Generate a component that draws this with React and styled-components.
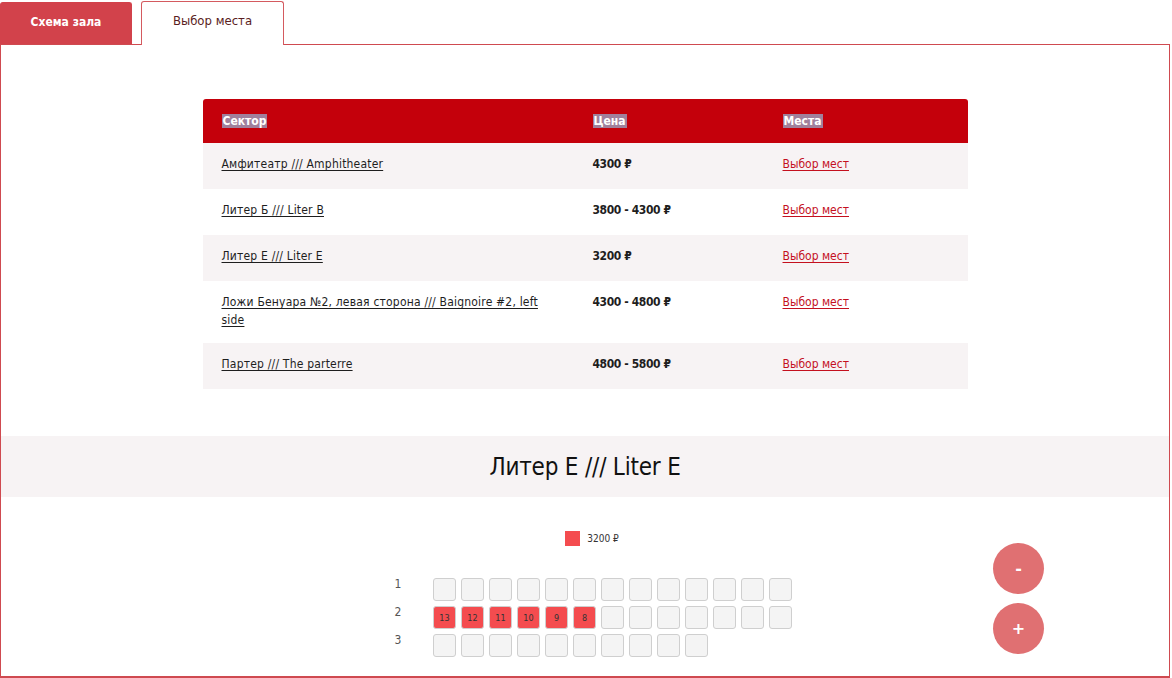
import React from 'react';
import styled, { createGlobalStyle } from 'styled-components';

const GlobalStyle = createGlobalStyle`
  html, body {
    margin: 0;
    padding: 0;
    background: #fff;
  }
  body {
    font-family: "DejaVu Sans Condensed", "DejaVu Sans", "Liberation Sans", sans-serif;
    color: #222;
  }
`;

const Page = styled.div`
  width: 1170px;
  height: 678px;
  display: flex;
  flex-direction: column;
`;

const Tabs = styled.div`
  display: flex;
  align-items: flex-end;
  gap: 9px;
  height: 44px;
`;

const Tab = styled.div`
  height: ${p => (p.$active ? '44px' : '42px')};
  width: ${p => p.$w}px;
  box-sizing: border-box;
  display: flex;
  align-items: center;
  justify-content: center;
  padding-bottom: ${p => (p.$active ? '6px' : '4px')};
  font-size: ${p => (p.$active ? '13px' : '12px')};
  border-radius: 3px 3px 0 0;
  background: ${p => (p.$active ? '#fff' : '#d2424b')};
  color: ${p => (p.$active ? '#5a1d22' : '#fff')};
  font-weight: ${p => (p.$active ? 'normal' : 'bold')};
  border: 1px solid ${p => (p.$active ? '#d45a5f' : '#d2424b')};
  border-bottom: none;
  margin-bottom: ${p => (p.$active ? '-1px' : '0')};
  position: relative;
  z-index: 1;
`;

const Panel = styled.div`
  flex: 1;
  border: 1px solid #cf4a50;
  border-bottom-width: 2px;
  display: flex;
  flex-direction: column;
  align-items: center;
  padding-top: 54px;
`;

const Table = styled.div`
  width: 765px;
  display: flex;
  flex-direction: column;
`;

const Row = styled.div`
  display: grid;
  grid-template-columns: 371px 190px 1fr;
  min-height: 46px;
  background: ${p => (p.$shade ? '#f7f3f4' : '#fff')};
  font-size: 12px;
  line-height: 18px;
`;

const HeadRow = styled(Row)`
  min-height: 44px;
  background: #c4000b;
  border-radius: 3px 3px 0 0;
  font-weight: bold;
  color: #fff;
`;

const Cell = styled.div`
  padding: 12px 19px 14px 19px;
  padding-right: ${p => (p.$wide ? '30px' : '19px')};
`;

const HeadCell = styled.div`
  padding: 13px 19px;
`;

const Selected = styled.span`
  background: #a0809c;
  padding: 0 1px;
`;

const SectorLink = styled.a`
  color: #1e1e1e;
  letter-spacing: 0.2px;
  text-decoration: underline;
  text-underline-offset: 2px;
`;

const Price = styled.span`
  font-weight: bold;
  letter-spacing: -0.4px;
  color: #1e1e1e;
`;

const SeatsLink = styled.a`
  color: #c4101e;
  text-decoration: underline;
  text-underline-offset: 2px;
`;

const TitleBand = styled.div`
  align-self: stretch;
  margin-top: 47px;
  height: 61px;
  background: #f7f3f4;
  display: flex;
  align-items: center;
  justify-content: center;
  font-size: 24px;
  color: #111;
  letter-spacing: -0.2px;
`;

const MapArea = styled.div`
  align-self: stretch;
  position: relative;
  display: flex;
  flex-direction: column;
  padding-top: 34px;
`;

const Legend = styled.div`
  display: flex;
  align-items: center;
  justify-content: center;
  gap: 7px;
  font-size: 10px;
  color: #333;
  padding-left: 14px;
`;

const Swatch = styled.span`
  width: 15px;
  height: 15px;
  background: #f44c4f;
`;

const Grid = styled.div`
  margin-top: 32px;
  margin-left: 386px;
  display: flex;
  flex-direction: column;
  gap: 5px;
`;

const SeatRow = styled.div`
  display: flex;
  align-items: flex-start;
`;

const RowLabel = styled.div`
  width: 22px;
  text-align: center;
  font-size: 12px;
  line-height: 14px;
  color: #555;
  margin-right: 24px;
  margin-top: -1px;
`;

const Seats = styled.div`
  display: flex;
  gap: 5px;
`;

const Seat = styled.div`
  width: 23px;
  height: 23px;
  box-sizing: border-box;
  border: 1px solid #cfcfcf;
  border-radius: 3px;
  background: ${p => (p.$taken ? '#f44c4f' : '#f4f4f4')};
  display: flex;
  align-items: center;
  justify-content: center;
  font-size: 9px;
  color: #333;
`;

const Zoom = styled.div`
  position: absolute;
  right: 125px;
  top: 46px;
  display: flex;
  flex-direction: column;
  gap: 9px;
`;

const ZoomButton = styled.button`
  width: 51px;
  height: 51px;
  border-radius: 50%;
  border: none;
  background: #e07072;
  color: #fff;
  font-family: "DejaVu Sans", sans-serif;
  font-size: 16px;
  font-weight: bold;
  display: flex;
  align-items: center;
  justify-content: center;
  padding: 0;
`;

const rows = [
  { sector: 'Амфитеатр /// Amphitheater', price: '4300 ₽' },
  { sector: 'Литер Б /// Liter В', price: '3800 - 4300 ₽' },
  { sector: 'Литер Е /// Liter Е', price: '3200 ₽' },
  { sector: 'Ложи Бенуара №2, левая сторона /// Baignoire #2, left side', price: '4300 - 4800 ₽' },
  { sector: 'Партер /// The parterre', price: '4800 - 5800 ₽' },
];

const seatRows = [
  { n: 1, seats: Array(13).fill(null) },
  { n: 2, seats: [13, 12, 11, 10, 9, 8, null, null, null, null, null, null, null] },
  { n: 3, seats: Array(10).fill(null) },
];

export default function App() {
  return (
    <>
      <GlobalStyle />
      <Page>
        <Tabs>
          <Tab $w={132}>Схема зала</Tab>
          <Tab $w={143} $active>Выбор места</Tab>
        </Tabs>
        <Panel>
          <Table>
            <HeadRow>
              <HeadCell><Selected>Сектор</Selected></HeadCell>
              <HeadCell><Selected>Цена</Selected></HeadCell>
              <HeadCell><Selected>Места</Selected></HeadCell>
            </HeadRow>
            {rows.map((r, i) => (
              <Row key={r.sector} $shade={i % 2 === 0}>
                <Cell $wide><SectorLink>{r.sector}</SectorLink></Cell>
                <Cell><Price>{r.price}</Price></Cell>
                <Cell><SeatsLink>Выбор мест</SeatsLink></Cell>
              </Row>
            ))}
          </Table>
          <TitleBand>Литер Е /// Liter Е</TitleBand>
          <MapArea>
            <Legend><Swatch />3200 ₽</Legend>
            <Grid>
              {seatRows.map(row => (
                <SeatRow key={row.n}>
                  <RowLabel>{row.n}</RowLabel>
                  <Seats>
                    {row.seats.map((s, i) => (
                      <Seat key={i} $taken={s !== null}>{s}</Seat>
                    ))}
                  </Seats>
                </SeatRow>
              ))}
            </Grid>
            <Zoom>
              <ZoomButton>-</ZoomButton>
              <ZoomButton>+</ZoomButton>
            </Zoom>
          </MapArea>
        </Panel>
      </Page>
    </>
  );
}
